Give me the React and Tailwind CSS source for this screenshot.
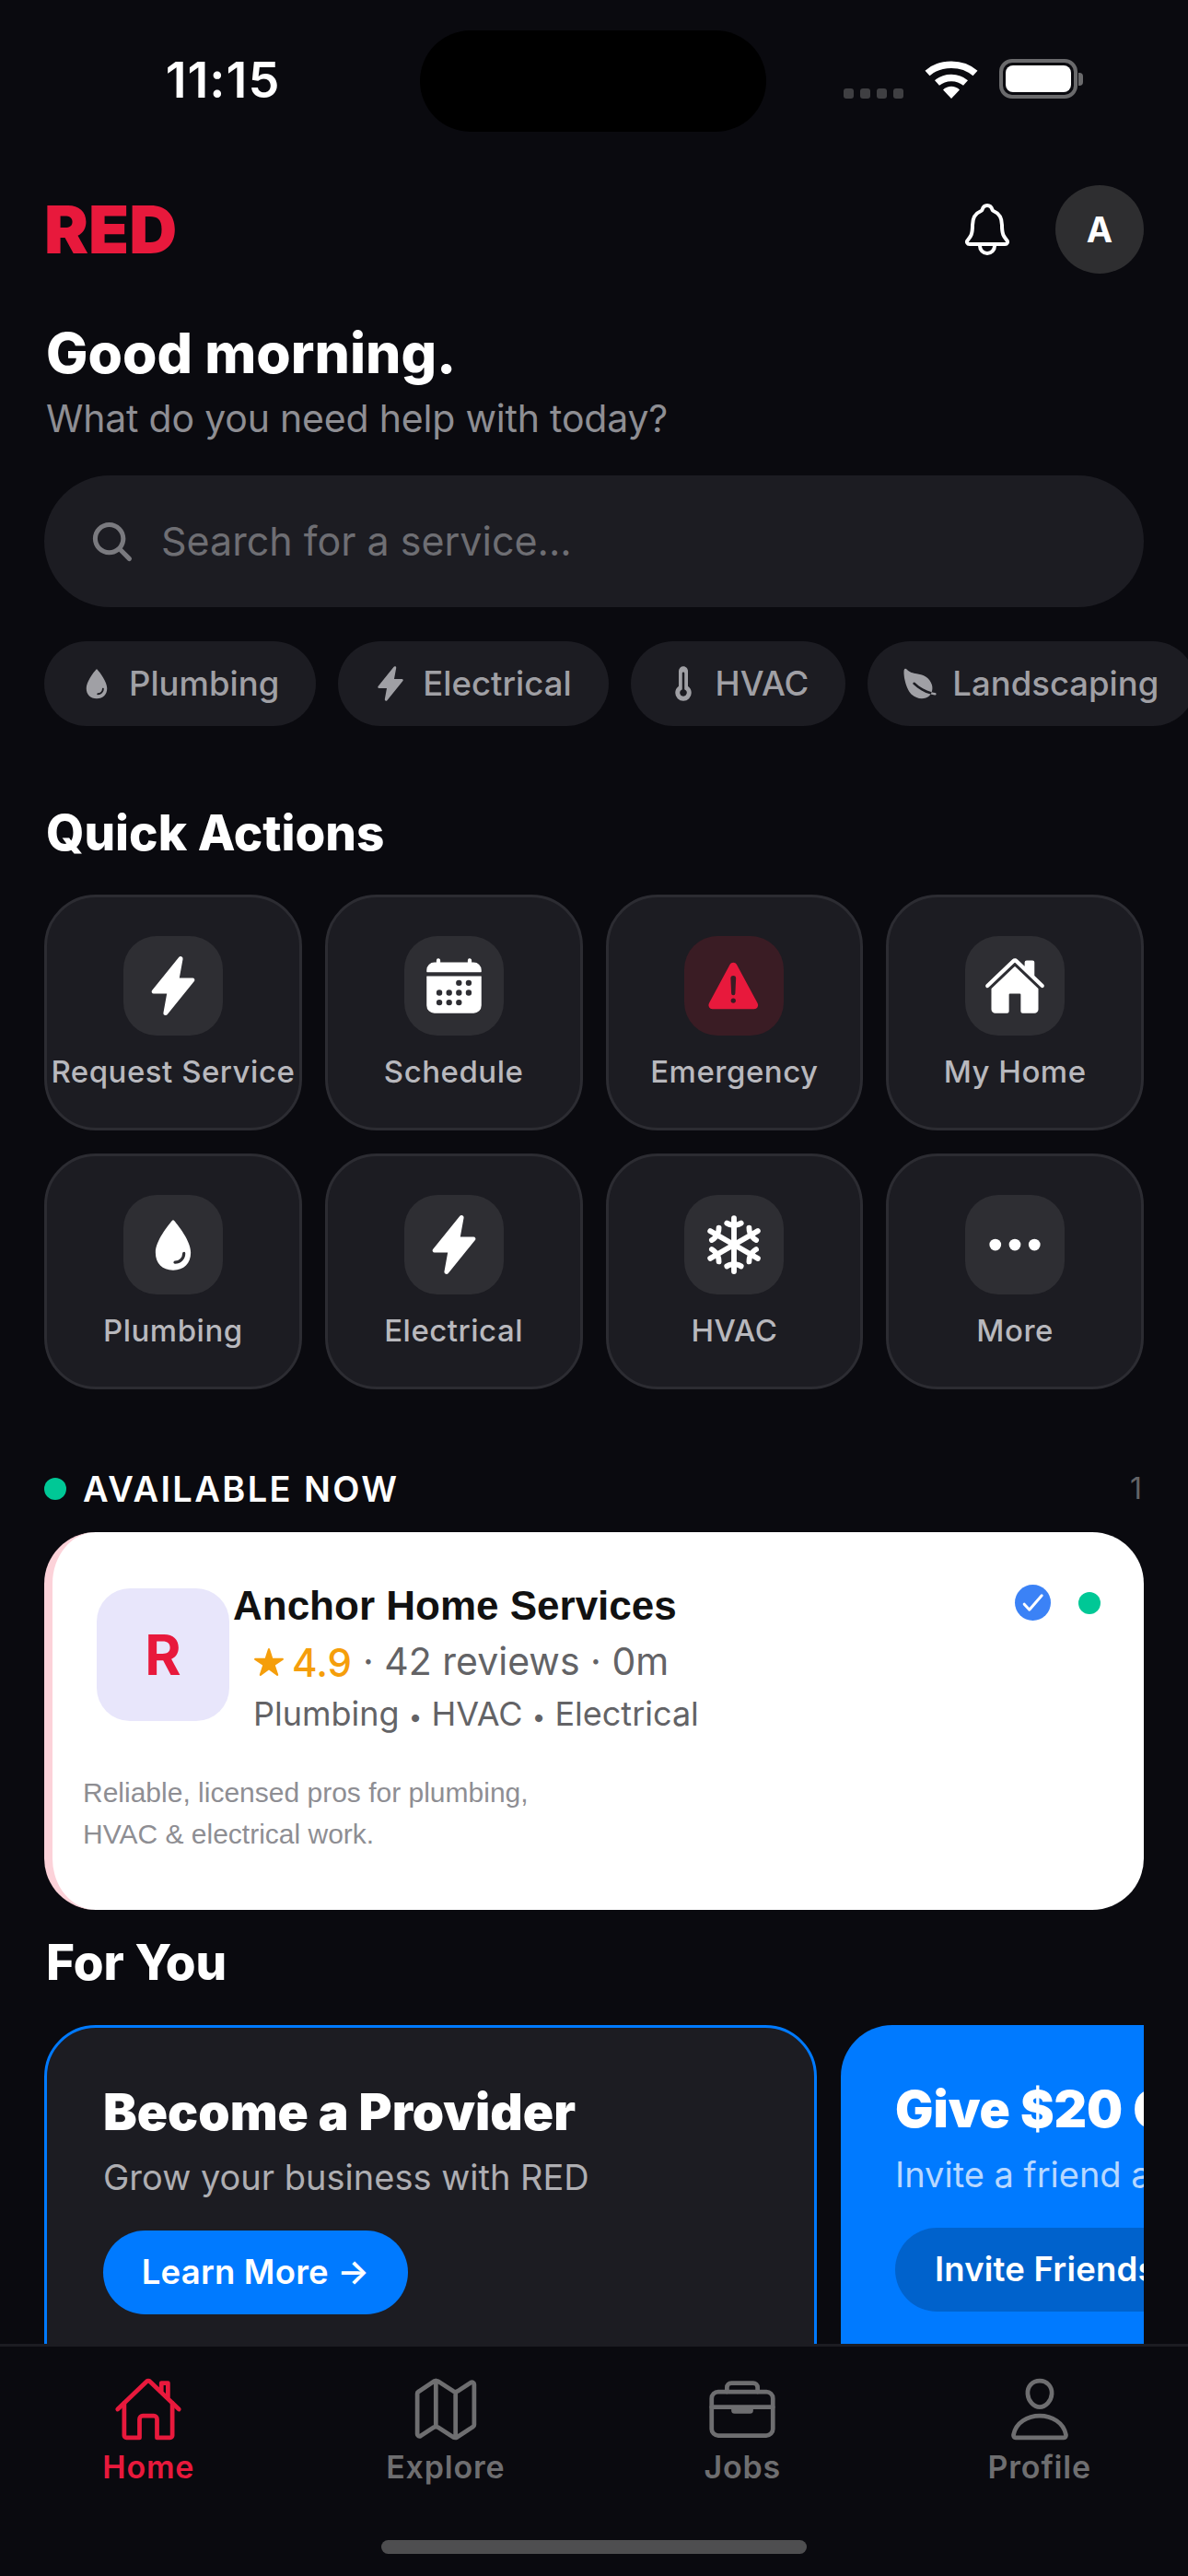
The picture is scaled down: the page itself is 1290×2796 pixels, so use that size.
import React from 'react';
import {
  IoFlash, IoCalendar, IoWarning, IoHome, IoWater, IoSnow, IoEllipsisHorizontal,
  IoThermometer, IoLeaf, IoHomeOutline, IoMapOutline, IoBriefcaseOutline, IoPersonOutline,
  IoNotificationsOutline, IoSearch, IoStar,
} from 'react-icons/io5';

const chips = [
  { label: 'Plumbing', Icon: IoWater },
  { label: 'Electrical', Icon: IoFlash },
  { label: 'HVAC', Icon: IoThermometer },
  { label: 'Landscaping', Icon: IoLeaf },
];

const actions = [
  { label: 'Request Service', Icon: IoFlash },
  { label: 'Schedule', Icon: IoCalendar },
  { label: 'Emergency', Icon: IoWarning, danger: true },
  { label: 'My Home', Icon: IoHome },
  { label: 'Plumbing', Icon: IoWater },
  { label: 'Electrical', Icon: IoFlash },
  { label: 'HVAC', Icon: IoSnow },
  { label: 'More', Icon: IoEllipsisHorizontal },
];

const tabs = [
  { label: 'Home', Icon: IoHomeOutline, active: true },
  { label: 'Explore', Icon: IoMapOutline },
  { label: 'Jobs', Icon: IoBriefcaseOutline },
  { label: 'Profile', Icon: IoPersonOutline },
];

const StatusBar = () => (
  <div className="flex h-[143px] shrink-0 items-start pt-[33px]">
    <div className="flex w-[456px] justify-center pl-[28px] pt-[24px] text-[54px] leading-[60px] font-semibold tracking-[1px] text-white">
      11:15
    </div>
    <div className="h-[110px] w-[376px] rounded-[55px] bg-black" />
    <div className="ml-[84px] flex h-[74px] items-end gap-[23px]">
      <div className="flex items-center gap-[7px]">
        {[0, 1, 2, 3].map((d) => (
          <span key={d} className="h-[11px] w-[11px] rounded-[3px] bg-[#3f3f42]" />
        ))}
      </div>
      <svg width="58" height="42" viewBox="0 0 58 42">
        <path d="M3 14.5C17 2 41 2 55 14.5" fill="none" stroke="#fff" strokeWidth="7.5" />
        <path d="M13.5 25C22 17.5 36 17.5 44.5 25" fill="none" stroke="#fff" strokeWidth="7.5" />
        <path d="M20 32.5C25 27.5 33 27.5 38 32.5L29 42Z" fill="#fff" />
      </svg>
      <div className="flex items-center gap-[1px]">
        <div className="flex h-[43px] w-[85px] items-center justify-center rounded-[14px] border-[4px] border-[#6a6a6c]">
          <div className="h-[29px] w-[71px] rounded-[8px] bg-white" />
        </div>
        <div className="h-[14px] w-[5px] rounded-r-[4px] bg-[#6a6a6c]" />
      </div>
    </div>
  </div>
);

const ActionCard = ({ label, Icon, danger }) => (
  <div className="flex h-[256px] flex-col items-center rounded-[56px] border-[3px] border-[#2c2c32] bg-[#1c1c22] pt-[42px]">
    <div className={`flex h-[108px] w-[108px] items-center justify-center rounded-[36px] ${danger ? 'bg-[#3a1c24]' : 'bg-[#2e2e33]'}`}>
      <Icon size={68} className={danger ? 'text-[#e8193c]' : 'text-white'} />
    </div>
    <div className="mt-[14px] text-[33px] leading-[50px] font-medium tracking-[0.5px] whitespace-nowrap text-[#b8b8bd]">{label}</div>
  </div>
);

export default function App() {
  return (
    <div className="flex h-[2796px] w-[1290px] flex-col overflow-hidden bg-[#0a0a0f] font-['Inter',sans-serif]">
      <StatusBar />

      <div className="min-h-0 flex-1 overflow-hidden">
        {/* Header */}
        <div className="mt-[58px] flex items-center justify-between px-[48px]">
          <div className="text-[72px] leading-[96px] font-black text-[#e8193c]">RED</div>
          <div className="flex items-center gap-[42px]">
            <IoNotificationsOutline size={64} className="text-white" />
            <div className="flex h-[96px] w-[96px] items-center justify-center rounded-full bg-[#2e2e30] text-[38px] font-bold text-white">A</div>
          </div>
        </div>

        {/* Greeting */}
        <div className="mt-[48px] px-[50px] text-[60.5px] leading-[76px] font-extrabold text-white">Good morning.</div>
        <div className="mt-[5px] px-[50px] text-[41px] leading-[56px] tracking-[-0.2px] text-[#8e8e93]">What do you need help with today?</div>

        {/* Search */}
        <div className="mx-[48px] mt-[34px] flex h-[143px] items-center gap-[27px] rounded-[72px] bg-[#1c1c22] pl-[48px]">
          <IoSearch size={52} className="text-[#7a7a7f]" />
          <span className="text-[43px] text-[#6e6e73]">Search for a service...</span>
        </div>

        {/* Category chips */}
        <div className="mt-[37px] flex gap-[24px] pl-[48px]">
          {chips.map(({ label, Icon }) => (
            <div key={label} className="flex h-[92px] shrink-0 items-center gap-[15px] rounded-[46px] bg-[#1c1c22] pr-[40px] pl-[37px] text-[36.5px] font-medium whitespace-nowrap text-[#a0a0a5]">
              <Icon size={40} />
              {label}
            </div>
          ))}
        </div>

        {/* Quick actions */}
        <div className="mt-[82px] px-[50px] text-[53px] leading-[68px] font-extrabold text-white">Quick Actions</div>
        <div className="mx-[48px] mt-[33px] grid grid-cols-4 gap-[25px]">
          {actions.map((a, i) => (
            <ActionCard key={i} {...a} />
          ))}
        </div>

        {/* Available now */}
        <div className="mt-[83px] flex h-[50px] items-center px-[48px]">
          <span className="h-[24px] w-[24px] rounded-full bg-[#00c896]" />
          <span className="ml-[18px] text-[38px] font-semibold tracking-[2.4px] text-white">AVAILABLE NOW</span>
          <span className="mr-[2px] ml-auto text-[32px] text-[#636366]">1</span>
        </div>

        <div className="mx-[48px] mt-[22px] h-[410px] rounded-[56px] border-l-[9px] border-[#fcd2d9] bg-white pt-[61px] pl-[33px]">
          <div className="flex h-[166px] items-start">
            <div className="ml-[15px] flex h-[144px] w-[144px] shrink-0 items-center justify-center rounded-[36px] bg-[#e8e6fb] text-[60px] font-bold text-[#e8193c]">R</div>
            <div className="mt-[-9px] ml-[4px]">
              <div className="font-['Liberation_Sans',sans-serif] text-[44px] leading-[56px] font-bold text-[#111]">Anchor Home Services</div>
              <div className="mt-[6px] ml-[22px] flex h-[54px] items-center text-[41px] text-[#636366]">
                <IoStar size={34} className="text-[#f59e0b]" />
                <span className="ml-[8px] text-[42px] font-medium text-[#f59e0b]">4.9</span>
                <span className="ml-[12px]">· 42 reviews · 0m</span>
              </div>
              <div className="mt-[6px] ml-[22px] text-[36px] leading-[46px] text-[#636366]">
                Plumbing <span className="text-[26px]">•</span> HVAC <span className="text-[26px]">•</span> Electrical
              </div>
            </div>
            <div className="mt-[-4px] mr-[47px] ml-auto flex items-center gap-[30px]">
              <div className="flex h-[39px] w-[39px] items-center justify-center rounded-full bg-[#3b82f6]">
                <svg width="39" height="39" viewBox="0 0 39 39">
                  <path d="M10.2 21.2L15.8 27.2L29.2 11.8" fill="none" stroke="#fff" strokeWidth="3" strokeLinecap="round" strokeLinejoin="round" />
                </svg>
              </div>
              <span className="h-[24px] w-[24px] rounded-full bg-[#00c896]" />
            </div>
          </div>
          <div className="mt-[33px] font-['Liberation_Sans',sans-serif] text-[30px] leading-[45px] text-[#8e8e93]">
            Reliable, licensed pros for plumbing,
            <br />
            HVAC &amp; electrical work.
          </div>
        </div>

        {/* For you */}
        <div className="mt-[23px] px-[50px] text-[53px] leading-[68px] font-extrabold text-white">For You</div>
        <div className="mx-[48px] mt-[34px] flex gap-[26px] overflow-hidden">
          <div className="h-[400px] w-[839px] shrink-0 rounded-[56px] border-[3px] border-[#007aff] bg-[#1c1c22] pt-[56px] pl-[61px]">
            <div className="text-[55px] leading-[70px] font-black text-white">Become a Provider</div>
            <div className="mt-[10px] text-[38px] leading-[52px] text-[#aeaeb2]">Grow your business with RED</div>
            <div className="mt-[32px] flex h-[91px] w-[331px] items-center justify-center rounded-[46px] bg-[#007aff] text-[36.5px] font-semibold tracking-[0.2px] text-white">Learn More →</div>
          </div>
          <div className="h-[400px] w-[839px] shrink-0 rounded-[56px] bg-[#007aff] pt-[56px] pl-[59px]">
            <div className="text-[55px] leading-[70px] font-black whitespace-nowrap text-white">Give $20 Get $20</div>
            <div className="mt-[10px] text-[38px] leading-[52px] whitespace-nowrap text-[#b8d8ff]">Invite a friend and earn rewards</div>
            <div className="mt-[32px] flex h-[91px] w-[420px] items-center rounded-[46px] bg-[#0062cc] px-[43px] text-[36.5px] font-semibold tracking-[0.2px] whitespace-nowrap text-white">Invite Friends →</div>
          </div>
        </div>
      </div>

      {/* Tab bar */}
      <div className="relative h-[252px] shrink-0 border-t-[3px] border-[#1c1c22] bg-[#0a0a0f]">
        <div className="grid grid-cols-4 pt-[30px]">
          {tabs.map(({ label, Icon, active }) => (
            <div key={label} className={`flex flex-col items-center ${active ? 'text-[#e8193c]' : 'text-[#6e6e70]'}`}>
              <Icon size={76} />
              <span className="mt-[5px] text-[34px] leading-[40px] font-semibold tracking-[0.8px]">{label}</span>
            </div>
          ))}
        </div>
        <div className="absolute bottom-[24px] left-[414px] h-[15px] w-[462px] rounded-full bg-[#4e4e50]" />
      </div>
    </div>
  );
}
